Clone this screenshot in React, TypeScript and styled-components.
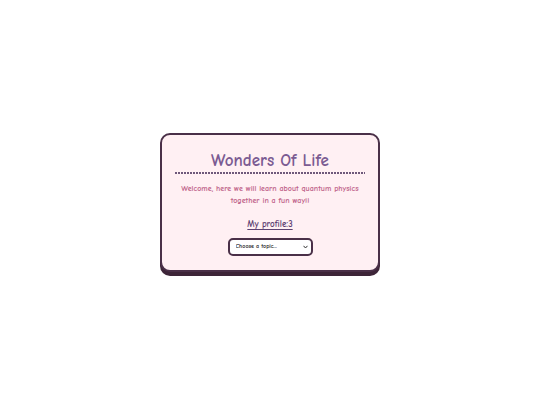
import React from 'react';
import styled, { createGlobalStyle } from 'styled-components';

const GlobalStyle = createGlobalStyle`
    html, body {
        margin: 0;
        padding: 0;
        background: #ffffff;
    }
    body {
        font-family: "Comic Sans MS", "Comic Neue", cursive;
    }
`;

const Page = styled.div`
    width: 540px;
    height: 405px;
    display: flex;
    align-items: center;
    justify-content: center;
`;

const Card = styled.div`
    box-sizing: border-box;
    width: 220px;
    margin-top: -1px;
    padding: 15px 13px 14px;
    background: #fff0f3;
    border: 2px solid #4a3048;
    border-radius: 10px;
    box-shadow: 0 4px 0 #3d2538;
    display: flex;
    flex-direction: column;
    align-items: center;
    text-align: center;
`;

const Title = styled.h1`
    margin: 0;
    font-size: 17px;
    font-weight: bold;
    color: #7b5b92;
    line-height: 22px;
`;

// fine dashed rule under the title
const Rule = styled.div`
    width: 100%;
    height: 2px;
    margin-top: 0;
    background: repeating-linear-gradient(
        to right,
        #6e587a 0 2px,
        transparent 2px 3px
    );
`;

const Welcome = styled.p`
    margin: 9px 0 0;
    font-size: 8px;
    font-weight: bold;
    line-height: 12px;
    color: #c0638a;
`;

const ProfileLink = styled.a`
    margin-top: 12px;
    font-size: 9px;
    font-weight: bold;
    color: #5e4272;
    text-decoration: underline;
    text-underline-offset: 2px;
    cursor: pointer;
`;

const SelectWrap = styled.div`
    position: relative;
    margin-top: 9px;
    width: 85px;
    height: 18px;
`;

const TopicSelect = styled.select`
    display: block;
    appearance: none;
    box-sizing: border-box;
    width: 100%;
    height: 100%;
    margin: 0;
    font-family: inherit;
    font-size: 6px;
    font-weight: bold;
    color: #222;
    background: #ffffff;
    border: 2px solid #4a3048;
    border-radius: 5px;
    padding: 0 10px 0 6px;
    outline: none;
`;

const Chevron = styled.svg`
    position: absolute;
    right: 5px;
    top: 7px;
    width: 5px;
    height: 4px;
    pointer-events: none;
`;

export default function App() {
    return (
        <Page>
            <GlobalStyle />
            <Card>
                <Title>Wonders Of Life</Title>
                <Rule />
                <Welcome>
                    Welcome, here we will learn about quantum physics
                    <br />
                    together in a fun way!!
                </Welcome>
                <ProfileLink>My profile:3</ProfileLink>
                <SelectWrap>
                    <TopicSelect defaultValue="">
                        <option value="">Choose a topic...</option>
                        <option value="superposition">Superposition</option>
                        <option value="entanglement">Entanglement</option>
                    </TopicSelect>
                    <Chevron viewBox="0 0 5 4">
                        <path d="M0.5 0.8 L2.5 3 L4.5 0.8" fill="none" stroke="#333" strokeWidth="1" />
                    </Chevron>
                </SelectWrap>
            </Card>
        </Page>
    );
}
